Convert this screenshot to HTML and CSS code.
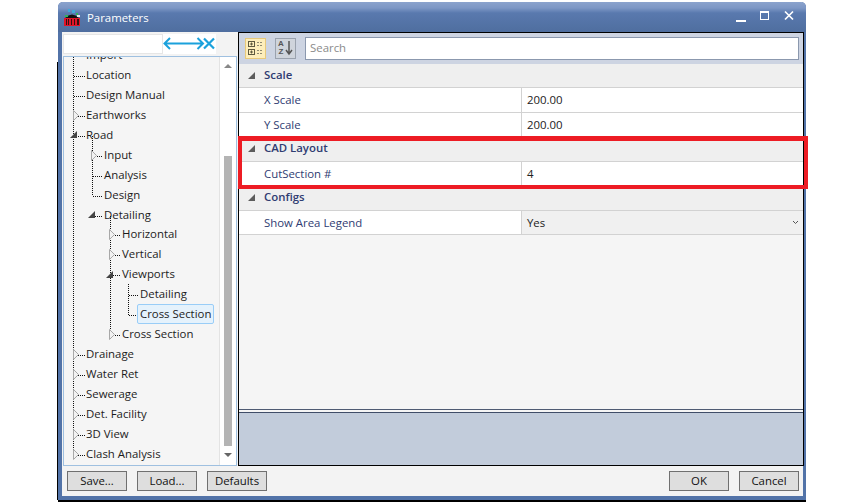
FILE: index.html
```html
<!DOCTYPE html>
<html lang="en">
<head>
<meta charset="utf-8">
<title>Parameters</title>
<link rel="stylesheet" href="styles.css">
</head>
<body>
<div class="window">
  <header class="titlebar">
    <svg class="logo" width="18" height="18" viewBox="0 0 18 18">
      <path d="M2 9 Q9 2 16 9 Z" fill="#111"/>
      <rect x="5" y="0" width="2" height="3" fill="#3fa8d8"/>
      <rect x="9" y="1" width="3" height="3" fill="#3fa8d8"/>
      <rect x="13" y="4" width="2" height="2" fill="#2fb35a"/>
      <rect x="2" y="6" width="3" height="2" fill="#2fb35a"/>
      <rect x="14" y="6" width="3" height="2" fill="#e8e8e8"/>
      <rect x="1" y="9" width="16" height="8" fill="#e0142a"/>
      <rect x="3" y="10" width="1" height="6" fill="#311"/>
      <rect x="5" y="10" width="1" height="6" fill="#311"/>
      <rect x="8" y="10" width="1" height="6" fill="#311"/>
      <rect x="11" y="10" width="1" height="6" fill="#311"/>
      <rect x="14" y="10" width="2" height="6" fill="#311"/>
    </svg>
    <span class="title">Parameters</span>
    <div class="winbtns">
      <svg width="12" height="12" viewBox="0 0 12 12"><rect x="1" y="10" width="10" height="2" fill="#fff"/></svg>
      <svg width="12" height="12" viewBox="0 0 12 12"><rect x="1.5" y="1.5" width="8" height="8" fill="none" stroke="#fff"/><rect x="1" y="1" width="9" height="2" fill="#fff"/></svg>
      <svg width="12" height="12" viewBox="0 0 12 12"><path d="M2 1.5 L10 9.5 M10 1.5 L2 9.5" stroke="#fff" stroke-width="1.7"/></svg>
    </div>
  </header>

  <div class="main">
    <aside class="left">
      <div class="filter">
        <div class="filter-input"></div>
        <div class="filter-tools">
          <svg width="53" height="18" viewBox="0 0 53 18">
            <path d="M1.5 8.5 H40 M7 3 L1.5 8.5 L7 14 M34.5 3 L40 8.5 L34.5 14" fill="none" stroke="#1ba1dc" stroke-width="2"/>
            <path d="M41 3.5 L51 13.5 M51 3.5 L41 13.5" fill="none" stroke="#1ba1dc" stroke-width="2.2"/>
          </svg>
        </div>
      </div>
      <div class="treebox">
        <div class="tree">
          <svg class="lines" width="155" height="408" viewBox="64 56 155 408">
            <g fill="none" stroke="#111" stroke-dasharray="1 1">
              <path d="M73.5 56 V454 M92.5 135 V195 M110.5 215 V334 M128.5 283 V314"/>
              <path d="M74 75.5 H85 M74 95.5 H85 M74 115.5 H85 M74 135.5 H85 M74 354.5 H85 M74 374.5 H85 M74 394.5 H85 M74 414.5 H85 M74 434.5 H85 M74 454.5 H85"/>
              <path d="M93 155.5 H103 M93 175.5 H103 M93 195.5 H103 M93 215.5 H103"/>
              <path d="M111 234.5 H121 M111 254.5 H121 M111 274.5 H121 M111 334.5 H121"/>
              <path d="M129 294.5 H139 M129 314.5 H139"/>
            </g>
            <g fill="#f2f2f2" stroke="#a8a8a8">
              <path d="M73.5 109.5 L78.5 114.5 L73.5 119.5 Z"/>
              <path d="M73.5 348.5 L78.5 353.5 L73.5 358.5 Z"/>
              <path d="M73.5 368.5 L78.5 373.5 L73.5 378.5 Z"/>
              <path d="M73.5 388.5 L78.5 393.5 L73.5 398.5 Z"/>
              <path d="M73.5 408.5 L78.5 413.5 L73.5 418.5 Z"/>
              <path d="M73.5 428.5 L78.5 433.5 L73.5 438.5 Z"/>
              <path d="M73.5 448.5 L78.5 453.5 L73.5 458.5 Z"/>
              <path d="M91.5 149.5 L96.5 154.5 L91.5 159.5 Z"/>
              <path d="M109.5 228.5 L114.5 233.5 L109.5 238.5 Z"/>
              <path d="M109.5 248.5 L114.5 253.5 L109.5 258.5 Z"/>
              <path d="M109.5 328.5 L114.5 333.5 L109.5 338.5 Z"/>
            </g>
            <g fill="#444">
              <path d="M77 130 V137 H70 Z"/>
              <path d="M95 210 V217 H88 Z"/>
              <path d="M113 270 V277 H106 Z"/>
            </g>
          </svg>
          <ul class="rows">
            <li class="l0">Import</li>
            <li class="l0">Location</li>
            <li class="l0">Design Manual</li>
            <li class="l0">Earthworks</li>
            <li class="l0">Road</li>
            <li class="l1">Input</li>
            <li class="l1">Analysis</li>
            <li class="l1">Design</li>
            <li class="l1">Detailing</li>
            <li class="l2">Horizontal</li>
            <li class="l2">Vertical</li>
            <li class="l2">Viewports</li>
            <li class="l3">Detailing</li>
            <li class="l3"><span class="selected">Cross Section</span></li>
            <li class="l2">Cross Section</li>
            <li class="l0">Drainage</li>
            <li class="l0">Water Ret</li>
            <li class="l0">Sewerage</li>
            <li class="l0">Det. Facility</li>
            <li class="l0">3D View</li>
            <li class="l0">Clash Analysis</li>
          </ul>
        </div>
        <div class="scrollbar">
          <svg width="8" height="5" viewBox="0 0 8 5"><path d="M0 5 L4 1 L8 5 Z" fill="#888"/></svg>
          <div class="track"><div class="thumb"></div></div>
          <svg width="8" height="5" viewBox="0 0 8 5"><path d="M0 0 L4 4 L8 0 Z" fill="#666"/></svg>
        </div>
      </div>
    </aside>

    <section class="props">
      <div class="toolbar">
        <button class="tool active" type="button" aria-label="Categorized">
          <svg width="18" height="18" viewBox="0 0 18 18">
            <g fill="none" stroke="#5f5a3f">
              <rect x="1.5" y="2.5" width="6" height="5"/><rect x="1.5" y="10.5" width="6" height="5"/>
              <path d="M3 5 H6 M4.5 3.5 V6.5 M3 13 H6 M4.5 11.5 V14.5"/>
            </g>
            <path d="M10 3.5 H16 M10 6.5 H16 M10 11.5 H16 M10 14.5 H16" stroke="#8f8a70" stroke-dasharray="2 1"/>
          </svg>
        </button>
        <button class="tool" type="button" aria-label="Alphabetical">
          <span class="az"><span>A</span><span>Z</span></span>
          <svg width="8" height="16" viewBox="0 0 8 16"><path d="M4 1 V14 M1 10 L4 14 L7 10" fill="none" stroke="#555" stroke-width="1.5"/></svg>
        </button>
        <div class="search">Search</div>
      </div>

      <div class="group">Scale</div>
      <div class="row"><div class="name">X Scale</div><div class="value">200.00</div></div>
      <div class="row"><div class="name">Y Scale</div><div class="value">200.00</div></div>
      <div class="group">CAD Layout</div>
      <div class="row"><div class="name">CutSection #</div><div class="value">4</div></div>
      <div class="group">Configs</div>
      <div class="row"><div class="name">Show Area Legend</div><div class="value combo">Yes
        <svg width="7" height="5" viewBox="0 0 7 5"><path d="M1 1 L3.5 3.5 L6 1" fill="none" stroke="#555"/></svg></div></div>
      <div class="blank"></div>
      <div class="description"></div>
    </section>
  </div>

  <footer class="footer">
    <button class="btn" type="button">Save...</button>
    <button class="btn" type="button">Load...</button>
    <button class="btn" type="button">Defaults</button>
    <div class="spacer"></div>
    <button class="btn" type="button">OK</button>
    <button class="btn" type="button">Cancel</button>
  </footer>

  <div class="highlight"></div>
</div>
</body>
</html>
```
FILE: styles.css
```css
* { box-sizing: border-box; }
html, body { margin: 0; padding: 0; background: #fff; }
body { font-family: "Open Sans", "Noto Sans", sans-serif; font-size: 11.4px; overflow: hidden; height: 502px; }

.window {
  position: relative;
  width: 748px;
  height: 498px;
  margin: 2px 0 0 58px;
  display: flex;
  flex-direction: column;
  background: #f3f3f3;
  border: solid #5273a8;
  border-width: 0 3px 4px 4px;
  border-radius: 5px 5px 0 0;
  box-shadow: 0 2px 0 #000;
}
.window::before {
  content: "";
  position: absolute;
  left: -5px;
  top: 60px;
  bottom: -4px;
  width: 1px;
  background: #000;
}

.titlebar {
  flex: 0 0 30px;
  margin: 0 -3px 0 -4px;
  padding: 0 11px 0 5px;
  display: flex;
  align-items: center;
  gap: 6px;
  color: #fff;
  border-radius: 5px 5px 0 0;
  background: linear-gradient(#8ba3cd 0, #7d97c5 6px, #5979ae 11px, #4f6e9f 30px);
}
.logo { flex: none; margin-top: 1px; }
.title { flex: 1; font-size: 11.4px; }
.winbtns { display: flex; gap: 12px; margin-top: -3px; }

.main { flex: 1; display: flex; min-height: 0; padding-top: 0; }

.left { width: 176px; flex: none; display: flex; flex-direction: column; padding: 2px 0 0 1px; }
.filter { display: flex; height: 20px; flex: none; }
.filter-input { width: 100px; background: #fff; border: 1px solid #e6e6e6; }
.filter-tools { width: 53px; background: #fff; display: flex; align-items: center; }
.treebox {
  margin-top: 2px;
  width: 174px;
  height: 410px;
  display: flex;
  border: 1px solid #9fc0e0;
  background: #f5f5f5;
}
.tree { position: relative; flex: 1; overflow: hidden; color: #1c1c1c; }
.lines { position: absolute; left: 0; top: 0; }
.rows { list-style: none; margin: -12px 0 0; padding: 0; position: relative; }
.rows li { height: 20px; line-height: 20px; white-space: nowrap; }
.rows .l0 { padding-left: 22px; }
.rows .l1 { padding-left: 40px; }
.rows .l2 { padding-left: 58px; }
.rows .l3 { padding-left: 76px; }
.rows .l2:nth-child(10) { margin-top: -1px; }
.selected {
  display: inline-block;
  height: 20px;
  line-height: 18px;
  margin-left: -3px;
  padding: 0 2px;
  background: #e5f2fc;
  border: 1px solid #99cdf7;
  border-radius: 2px;
  vertical-align: top;
}

.scrollbar {
  width: 17px;
  flex: none;
  background: #fff;
  border-left: 1px solid #e3e3e3;
  display: flex;
  flex-direction: column;
  align-items: center;
  padding: 6px 0 7px;
  gap: 4px;
}
.track { flex: 1; width: 8px; padding-bottom: 3px; display: flex; flex-direction: column; justify-content: flex-end; }
.thumb { height: 290px; background: #b4b4b4; }

.props {
  width: 566px;
  flex: none;
  height: 434px;
  margin-left: 0;
  display: flex;
  flex-direction: column;
  border: 1px solid #000;
  background: #f5f5f5;
  color: #2f3c72;
}
.toolbar {
  flex: 0 0 30.5px;
  display: flex;
  align-items: center;
  background: #cdd4e2;
  padding: 0 4px 0 6px;
}
.tool {
  width: 21px;
  height: 21px;
  padding: 0;
  margin-right: 9px;
  display: flex;
  align-items: center;
  justify-content: center;
  background: #cfd4dc;
  border: 1px solid #9aa2ae;
  color: #555;
}
.tool.active { background: #fdeebb; border-color: #e8c97a; }
.az { display: flex; flex-direction: column; font-size: 8px; line-height: 8px; font-weight: 600; margin-right: 1px; }
.search {
  flex: 1;
  height: 23px;
  margin-left: 0;
  padding-left: 4px;
  line-height: 20px;
  background: #fff;
  border: 1px solid #8b98ae;
  color: #8a8a8a;
}
.group {
  flex: 0 0 24.5px;
  padding-left: 25px;
  line-height: 21.5px;
  font-weight: 600;
  background: #efefef;
  border-bottom: 1px solid #d2d2d2;
  position: relative;
}
.group::before {
  content: "";
  position: absolute;
  left: 9px;
  top: 8px;
  border-style: solid;
  border-width: 0 0 7px 7px;
  border-color: transparent transparent #5c5c5c transparent;
}
.row {
  flex: 0 0 24.5px;
  display: flex;
  background: #fff;
  border-bottom: 1px solid #d2d2d2;
}
.name { width: 283px; padding-left: 25px; line-height: 23.5px; border-right: 1px solid #d2d2d2; }
.value { flex: 1; padding-left: 5px; line-height: 23.5px; color: #222; }
.combo {
  display: flex;
  justify-content: space-between;
  align-items: center;
  background: #f0f0f0;
  padding-right: 4px;
}
.blank { flex: 1; border-bottom: 1px solid #4f5b73; }
.description {
  flex: 0 0 53px;
  margin-top: 2px;
  background: #c2ccdb;
  border-top: 1px solid #3f4d68;
}

.footer { flex: 0 0 30px; display: flex; gap: 10px; padding: 5px 4px 0 5px; align-items: flex-start; }
.spacer { flex: 1; }
.btn {
  width: 60px;
  height: 20px;
  padding: 0;
  font: inherit;
  line-height: 18px;
  color: #111;
  background: #dedede;
  border: 1px solid #707070;
}

.highlight {
  position: absolute;
  left: 176px;
  top: 134px;
  width: 570px;
  height: 53px;
  border: 4px solid #ed1c24;
  border-top-width: 5px;
  pointer-events: none;
}
```
